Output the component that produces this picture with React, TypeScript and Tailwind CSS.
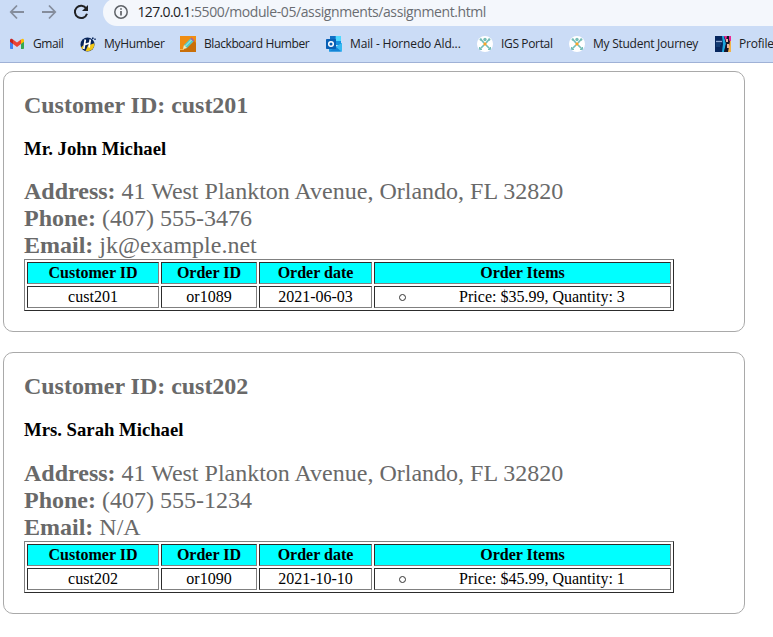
import type { ReactNode } from "react";

const uiFont = "font-['Segoe_UI','Open_Sans',sans-serif]";

function GmailIcon() {
  return (
    <svg width="16" height="16" viewBox="0 0 16 16">
      <path d="M1 4v8.2c0 .5.4.8.8.8H4V7z" fill="#4285f4" />
      <path d="M12 7v6h2.200c.5 0 .8-.4.8-.8V4z" fill="#34a853" />
      <path d="M12 3.600V8l3-2.300V4.200c0-1.500-1.600-2-2.500-1z" fill="#fbbc04" />
      <path d="M4 8V3.600l4 3 4-3V8l-4 3z" fill="#ea4335" />
      <path d="M1 4.200v1.500L4 8V3.600l-.5-.4C2.500 2.300 1 2.800 1 4.200z" fill="#c5221f" />
    </svg>
  );
}

function HumberIcon() {
  return (
    <svg width="16" height="16" viewBox="0 0 16 16">
      <circle cx="7.500" cy="8.500" r="7" fill="#07245a" />
      <path d="M5.500 15 8 9.500l6.300-2.200A7 7 0 0 1 5.500 15z" fill="#f2c717" />
      <path d="M1 11.500 3.500 9l-.5 4.500z" fill="#f2c717" />
      <path d="M5.300 3.500 3.800 13M10.300 3.500 9 11.500M4.500 8.800l5.500-2" stroke="#fff" strokeWidth="1.700" fill="none" />
      <path d="M12 1.500h1.600v1.400H12zM14.300 2.500h1.400V4h-1.400z" fill="#07245a" />
    </svg>
  );
}

function PencilIcon() {
  return (
    <svg width="16" height="16" viewBox="0 0 16 16">
      <path d="M0 0h16v16H0z" fill="#ef8d13" />
      <path d="M14 5 16 7v9H0v-2l4-.5z" fill="#c96f09" />
      <path d="m3 13 1-4 6.500-6.500 3 3L7 12z" fill="#55c9c5" />
      <path d="M5 10.500 11.500 4" stroke="#b8f2e9" strokeWidth="1" />
      <path d="m10.500 2.500 1-1 3 3-1 1z" fill="#a45ab1" />
      <path d="m3 13 1-4 3 3z" fill="#ffe4ae" />
      <path d="M0 13.500h4" stroke="#ffb54a" />
    </svg>
  );
}

function OutlookIcon() {
  return (
    <svg width="16" height="16" viewBox="0 0 16 16">
      <path d="M4 0h11v9H4z" fill="#1490df" />
      <path d="M9.500 0H15v5H9.500z" fill="#50d9ff" />
      <path d="M4 0h5.500v5H4z" fill="#0f6fc5" />
      <path d="M3 15.500V8l7 3 6-4v8.500z" fill="#1a9ce8" />
      <path d="m9 11 7-4v8.500z" fill="#35b8f1" />
      <path d="M3 15.500 10 11l5 4.500z" fill="#1283d6" />
      <rect y="3" width="10" height="10" rx=".7" fill="#075fb5" />
      <circle cx="5" cy="8" r="2.300" stroke="#fff" strokeWidth="1.500" fill="none" />
    </svg>
  );
}

function PortalIcon() {
  return (
    <svg width="16" height="16" viewBox="0 0 16 16">
      <circle cx="8" cy="8" r="8" fill="#fff" />
      <path d="m4 3.500 3 3.500M12 3.500 9 7M3 13l4-4M13 13 9 9" stroke="#76beb7" strokeWidth="1.700" />
      <path d="M2.500 11v2.500H5M13.500 11v2.500H11" stroke="#76beb7" strokeWidth="1" fill="none" />
      <circle cx="3.800" cy="3.500" r="1.200" fill="#76beb7" />
      <circle cx="12.200" cy="3.500" r="1.200" fill="#76beb7" />
      <circle cx="8" cy="3.500" r="1.700" fill="#76beb7" />
      <path d="m8 6 2 2-2 2-2-2z" fill="#f5a42b" />
    </svg>
  );
}

function ProfileIcon() {
  return (
    <svg width="16" height="16" viewBox="0 0 16 16">
      <path d="M0 0h16v16H0z" fill="#06265e" />
      <path d="M7 0h2l2 7-2 9H7l1-8z" fill="#1aa7de" />
      <path d="M9 0h7v16H9l2-8z" fill="#151429" />
      <path d="M9 0h3l-1 5zM14 0h2v7l-2-3z" fill="#ed2694" />
      <path d="M15 5h1v11h-3z" fill="#f2b348" />
      <path d="M11 3h2v3h-2zM12 8h2v4h-2z" fill="#e4b6a3" />
      <path d="M1 5.500h6" stroke="#8fa9d2" strokeWidth="1.400" />
      <path d="M1 8h5M1 10h4" stroke="#2d659c" strokeWidth=".7" />
    </svg>
  );
}

function Bookmark({ width, icon, label, spacing }: { width: string; icon: ReactNode; label: string; spacing: string }) {
  return (
    <div className={`flex shrink-0 items-center gap-2 ${width}`}>
      <span className="shrink-0">{icon}</span>
      <span className={`whitespace-nowrap text-[12px] leading-4 ${spacing}`}>{label}</span>
    </div>
  );
}

function BrowserBar() {
  return (
    <header className={`h-[63px] overflow-hidden border-b border-[#9fb1d6] bg-[#cbdcf6] text-[#202124] ${uiFont}`}>
      <div className="flex h-[26px] pl-[9px]">
        <div className="flex w-[94px] pt-1 text-[#858d9c]">
          <svg width="16" height="16" viewBox="0 0 16 16" fill="none" stroke="currentColor" strokeWidth="1.800">
            <path d="M15 8H2M8 1.500 1.800 8 8 14.500" />
          </svg>
          <svg className="ml-4" width="16" height="16" viewBox="0 0 16 16" fill="none" stroke="currentColor" strokeWidth="1.800">
            <path d="M1 8h13M8 1.500 14.200 8 8 14.500" />
          </svg>
          <svg className="ml-4" width="16" height="16" viewBox="0 0 16 16" fill="none">
            <path d="M13.300 4.500A6.200 6.200 0 1 0 14 9.800" stroke="#202124" strokeWidth="2" />
            <path d="M15 1v6H9z" fill="#202124" />
          </svg>
        </div>
        <div className="-mt-[2px] flex h-7 flex-1 items-center rounded-l-full bg-[#f4f7fc] pl-[11px] text-[14px]">
          <svg width="14" height="14" viewBox="0 0 14 14" fill="none" stroke="#5f6368" strokeWidth="1.500">
            <circle cx="7" cy="7" r="6.200" />
            <path d="M7 6v4.500M7 3.200v1.600" strokeWidth="1.700" />
          </svg>
          <span className="ml-[9.500px] whitespace-nowrap leading-5 tracking-[-0.4px] text-[#6a6d72]">
            <span className="tracking-[-0.65px] text-[#202124]">127.0.0.1</span>:5500/module-05/assignments/assignment.html
          </span>
        </div>
      </div>
      <nav className="flex h-9 items-center pl-[9px]">
        <Bookmark width="w-[71px]" icon={<GmailIcon />} label="Gmail" spacing="tracking-[-0.45px]" />
        <Bookmark width="w-[100px]" icon={<HumberIcon />} label="MyHumber" spacing="tracking-[-0.32px]" />
        <Bookmark width="w-[146px]" icon={<PencilIcon />} label="Blackboard Humber" spacing="tracking-[-0.42px]" />
        <Bookmark width="w-[151px]" icon={<OutlookIcon />} label="Mail - Hornedo Ald..." spacing="tracking-[-0.15px]" />
        <Bookmark width="w-[92px]" icon={<PortalIcon />} label="IGS Portal" spacing="tracking-[-0.35px]" />
        <Bookmark width="w-[146px]" icon={<PortalIcon />} label="My Student Journey" spacing="tracking-[-0.26px]" />
        <Bookmark width="w-[80px]" icon={<ProfileIcon />} label="Profile" spacing="tracking-[-0.2px]" />
      </nav>
    </header>
  );
}

interface Customer {
  id: string;
  name: string;
  address: string;
  phone: string;
  email: string;
  order: string;
  date: string;
  item: string;
}

const customers: Customer[] = [
  { id: "cust201", name: "Mr. John Michael", address: "41 West Plankton Avenue, Orlando, FL 32820", phone: "(407) 555-3476", email: "jk@example.net", order: "or1089", date: "2021-06-03", item: "Price: $35.99, Quantity: 3" },
  { id: "cust202", name: "Mrs. Sarah Michael", address: "41 West Plankton Avenue, Orlando, FL 32820", phone: "(407) 555-1234", email: "N/A", order: "or1090", date: "2021-10-10", item: "Price: $45.99, Quantity: 1" },
];

const cell = "h-[22px] border border-t-[#2c2c2c] border-l-[#2c2c2c] border-r-[#808080] border-b-[#808080] p-0 text-center leading-[18px]";

function CustomerCard({ customer, height, detailsGap }: { customer: Customer; height: string; detailsGap: string }) {
  return (
    <section className={`w-[742px] rounded-[10px] border border-[#a9a9a9] px-5 pt-5 text-[#696969] ${height}`}>
      <h2 className="text-[24px] font-bold leading-[27px] tracking-[-0.03px]">Customer ID: {customer.id}</h2>
      <h3 className="mt-[19px] text-[18.720px] font-bold leading-[21px] text-black">{customer.name}</h3>
      <div className={`text-[24px] leading-[27px] ${detailsGap}`}>
        <p><b>Address:</b> {customer.address}</p>
        <p><b>Phone:</b> {customer.phone}</p>
        <p><b>Email:</b> {customer.email}</p>
      </div>
      <table className="w-[650px] table-fixed border-separate border-spacing-[2px] border border-t-[#808080] border-l-[#808080] border-r-[#2c2c2c] border-b-[#2c2c2c] text-[16px] text-black">
        <colgroup>
          <col className="w-[132px]" />
          <col className="w-[96px]" />
          <col className="w-[113px]" />
          <col className="w-[297px]" />
        </colgroup>
        <thead>
          <tr className="bg-[#00ffff]">
            <th className={cell}>Customer ID</th>
            <th className={cell}>Order ID</th>
            <th className={cell}>Order date</th>
            <th className={cell}>Order Items</th>
          </tr>
        </thead>
        <tbody>
          <tr>
            <td className={cell}>{customer.id}</td>
            <td className={cell}>{customer.order}</td>
            <td className={cell}>{customer.date}</td>
            <td className={cell}>
              <div className="flex items-center pl-6">
                <span className="size-[7px] rounded-full border-[1.500px] border-[#333]" />
                <span className="flex-1 pl-[19px] pr-[11px] text-center">{customer.item}</span>
              </div>
            </td>
          </tr>
        </tbody>
      </table>
    </section>
  );
}

export default function App() {
  return (
    <div className="h-[637px] overflow-hidden bg-white">
      <BrowserBar />
      <main className="flex flex-col gap-5 pt-2 pl-[3px] font-['Liberation_Serif',serif]">
        <CustomerCard customer={customers[0]} height="h-[261px]" detailsGap="mt-[19px]" />
        <CustomerCard customer={customers[1]} height="h-[262px]" detailsGap="mt-5" />
      </main>
    </div>
  );
}
